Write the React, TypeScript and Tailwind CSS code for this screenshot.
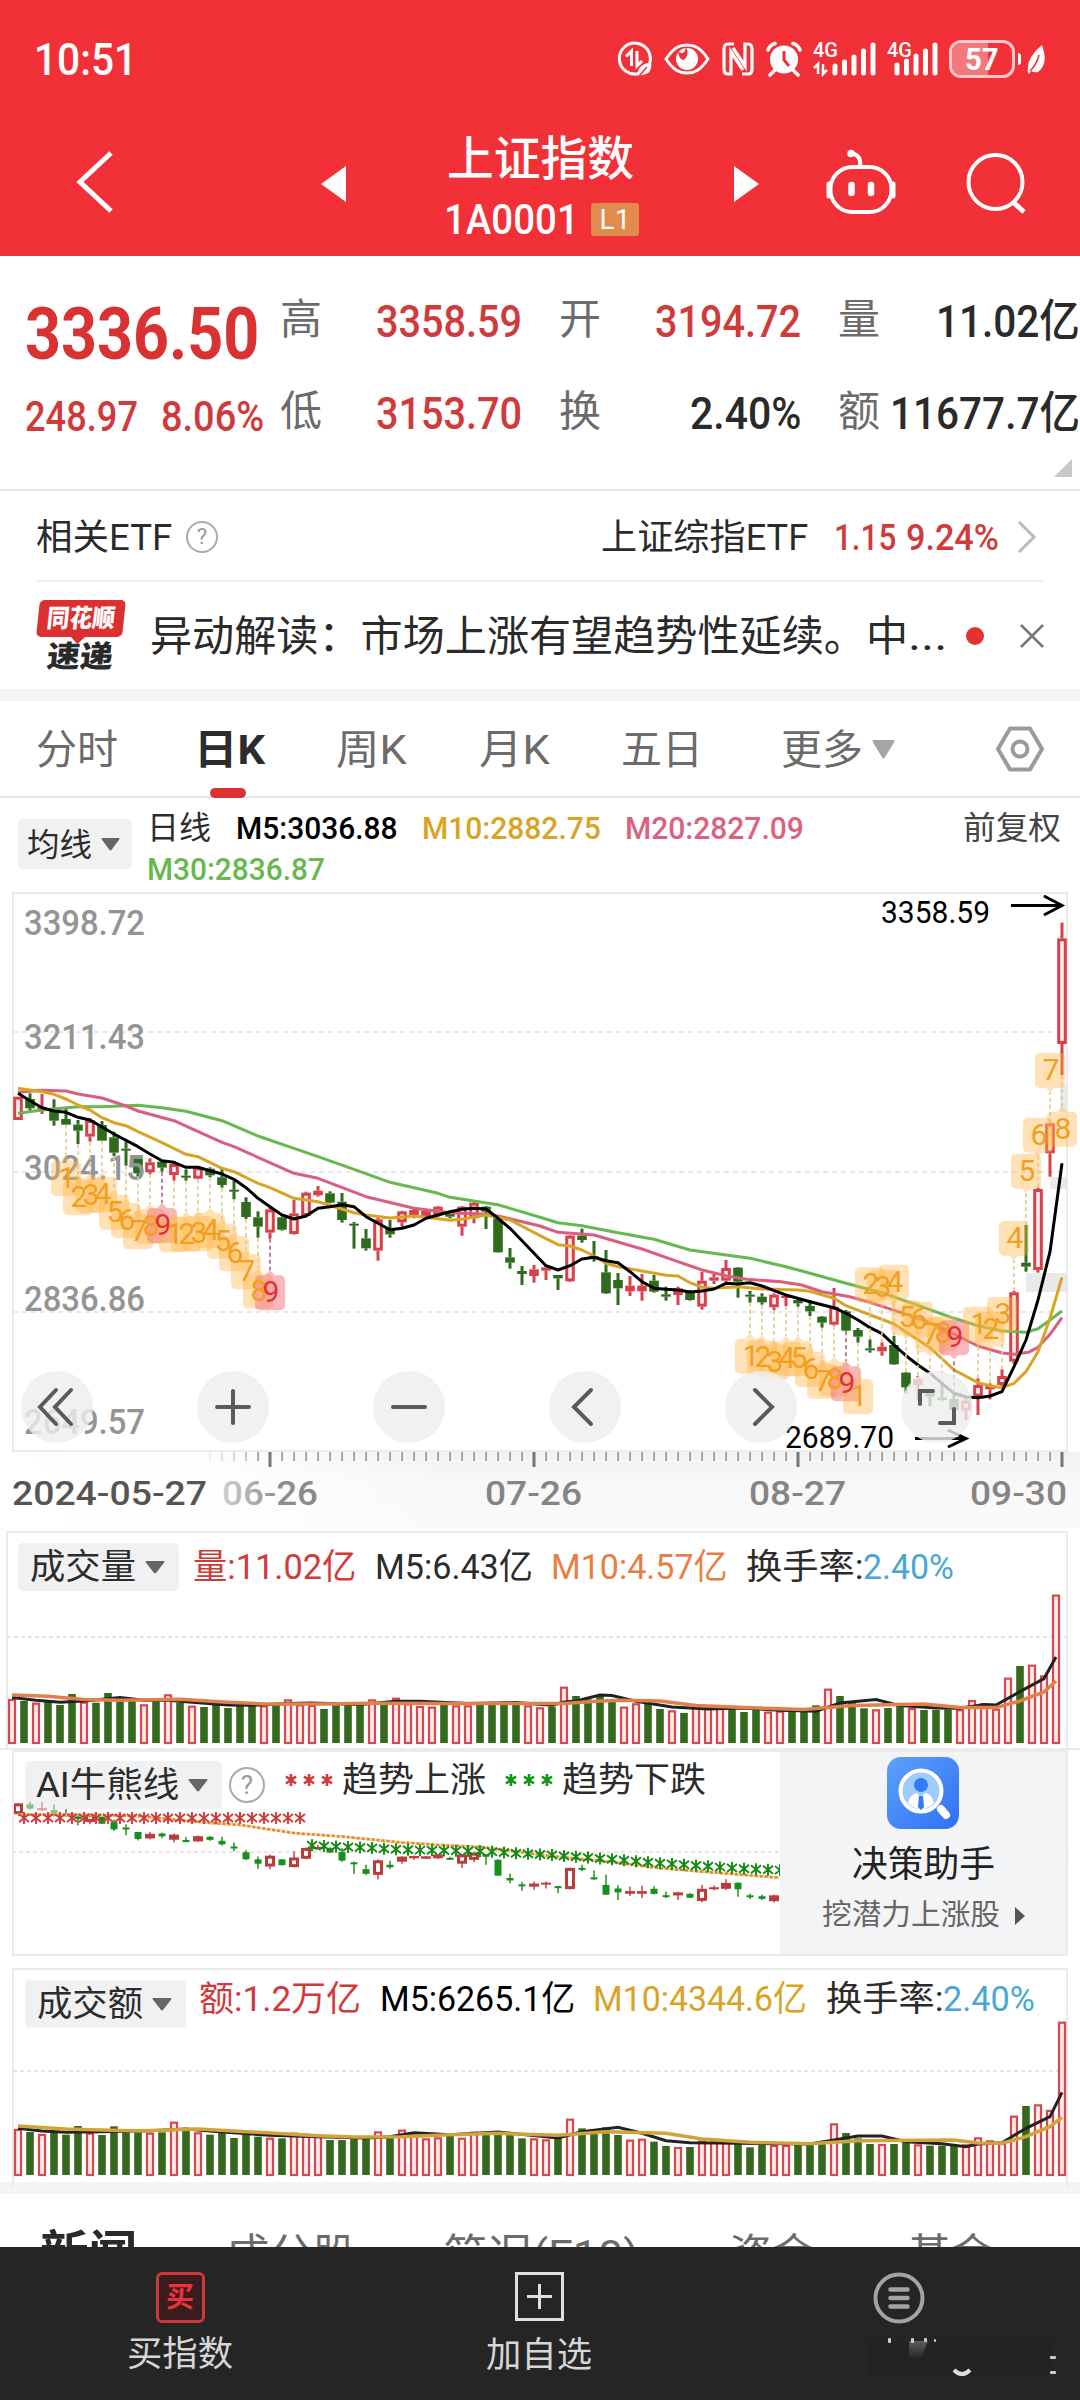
import React, { useLayoutEffect, useRef, useState } from "react";

const FONT = "Roboto, 'Noto Sans CJK SC', sans-serif";

/* Text condensed or widened to fill the width given by its class. */
function Fit({ className = "", children }: { className?: string; children: React.ReactNode }) {
  const outer = useRef<HTMLSpanElement>(null);
  const inner = useRef<HTMLSpanElement>(null);
  const [scale, setScale] = useState(1);
  useLayoutEffect(() => {
    if (outer.current && inner.current && inner.current.offsetWidth) {
      setScale(outer.current.clientWidth / inner.current.offsetWidth);
    }
  }, []);
  return (
    <span ref={outer} className={`block shrink-0 whitespace-nowrap leading-none ${className}`}>
      <span ref={inner} className="inline-block origin-left" style={{ transform: `scaleX(${scale})` }}>
        {children}
      </span>
    </span>
  );
}

function Label({ x, y, w, size, fill, children, weight = 500 }: { x: number; y: number; w: number; size: number; fill: string; children: string; weight?: number }) {
  return (
    <text x={x} y={y} fontSize={size} fill={fill} textLength={w} lengthAdjust="spacingAndGlyphs" fontWeight={weight} style={{ fontFamily: FONT }}>
      {children}
    </text>
  );
}

function Caret({ className }: { className: string }) {
  return (
    <svg viewBox="0 0 20 14" preserveAspectRatio="none" className={className}>
      <path d="M1 0H19Q20 1 19 2L11 13Q10 14 9 13L1 2Q0 1 1 0Z" fill="currentColor" />
    </svg>
  );
}

function Help({ className }: { className: string }) {
  return <span className={`flex shrink-0 items-center justify-center rounded-full border-2 border-[#aaa] leading-none text-[#999] ${className}`}>?</span>;
}

/* Each row: up or down, body top, body bottom, wick top, wick bottom. */
type Candle = [number, number, number, number, number];
const U = 1;
const D = 0;
const candles: Candle[] = [
  [U, 620, 690, 620, 690], [D, 627, 655, 610, 662], [U, 652, 656, 612, 672], [D, 662, 692, 628, 707], [D, 687, 704, 657, 704],
  [D, 704, 722, 690, 762], [U, 690, 740, 685, 755], [D, 705, 752, 693, 752], [D, 742, 788, 725, 798], [D, 776, 781, 755, 827],
  [D, 805, 850, 805, 860], [U, 817, 847, 805, 852], [D, 815, 833, 810, 845], [U, 822, 855, 815, 872], [D, 857, 862, 838, 872],
  [U, 832, 866, 828, 868], [D, 836, 856, 832, 862], [D, 862, 885, 835, 893], [D, 899, 904, 873, 928], [D, 936, 981, 922, 987],
  [D, 982, 1010, 964, 1043], [U, 958, 1028, 950, 1046], [D, 982, 1019, 980, 1022], [U, 970, 1032, 930, 1034], [U, 908, 978, 905, 982],
  [U, 902, 916, 888, 920], [D, 910, 938, 904, 940], [D, 935, 990, 909, 998], [D, 1001, 1006, 996, 1076], [D, 1045, 1075, 1017, 1082],
  [U, 988, 1082, 982, 1112], [D, 1017, 1033, 990, 1043], [U, 964, 997, 962, 1010], [U, 960, 975, 957, 985], [U, 962, 978, 960, 980],
  [U, 950, 975, 948, 980], [D, 972, 980, 965, 985], [U, 950, 1010, 948, 1037], [U, 938, 985, 932, 1000], [D, 950, 965, 948, 1017],
  [D, 985, 1087, 980, 1088], [D, 1102, 1118, 1074, 1136], [D, 1143, 1152, 1128, 1185], [U, 1138, 1158, 1125, 1178], [U, 1132, 1142, 1125, 1170],
  [D, 1155, 1165, 1155, 1200], [U, 1037, 1174, 1035, 1176], [D, 1037, 1050, 1016, 1058], [D, 1098, 1103, 1053, 1115], [D, 1147, 1210, 1080, 1212],
  [D, 1170, 1195, 1149, 1245], [U, 1187, 1204, 1158, 1218], [U, 1187, 1204, 1152, 1232], [D, 1172, 1205, 1155, 1208], [D, 1213, 1220, 1190, 1232],
  [U, 1195, 1215, 1190, 1245], [D, 1205, 1230, 1200, 1232], [U, 1172, 1250, 1146, 1259], [U, 1162, 1172, 1150, 1182], [U, 1134, 1172, 1110, 1180],
  [D, 1133, 1175, 1131, 1223], [D, 1214, 1220, 1203, 1238], [D, 1220, 1237, 1210, 1244], [U, 1214, 1252, 1210, 1260], [U, 1218, 1224, 1215, 1248],
  [D, 1230, 1240, 1226, 1250], [D, 1248, 1264, 1230, 1278], [D, 1280, 1298, 1278, 1313], [U, 1250, 1304, 1194, 1307], [D, 1264, 1322, 1260, 1324],
  [D, 1320, 1340, 1314, 1358], [D, 1375, 1381, 1348, 1388], [U, 1370, 1384, 1357, 1397], [D, 1365, 1423, 1338, 1425], [D, 1448, 1492, 1446, 1510],
  [U, 1468, 1485, 1458, 1530], [D, 1505, 1520, 1500, 1548], [D, 1522, 1530, 1475, 1532], [D, 1527, 1560, 1510, 1562], [U, 1532, 1562, 1525, 1590],
  [U, 1485, 1520, 1465, 1575], [U, 1488, 1498, 1480, 1528], [U, 1458, 1485, 1438, 1490], [U, 1207, 1415, 1203, 1422], [D, 1118, 1130, 1005, 1145],
  [U, 897, 1140, 893, 1148], [U, 700, 790, 698, 860], [U, 145, 462, 98, 555],
];

type Pt = [number, number];
const ma5: Pt[] = [[0, 610], [1, 632], [2, 653], [3, 663], [4, 667], [5, 682], [6, 690], [8, 732], [10, 770], [11, 792], [12, 812], [13, 817], [14, 832], [15, 832], [16, 842], [17, 852], [18, 868], [19, 893], [20, 925], [21, 950], [22, 975], [23, 987], [24, 978], [25, 955], [26, 950], [27, 944], [28, 950], [29, 980], [30, 1000], [31, 1019], [32, 1015], [33, 1005], [34, 985], [35, 975], [36, 965], [37, 958], [38, 955], [39, 957], [40, 985], [41, 1015], [42, 1052], [43, 1090], [44, 1127], [45, 1140], [46, 1127], [47, 1107], [48, 1102], [49, 1112], [50, 1118], [51, 1145], [52, 1175], [53, 1195], [54, 1198], [55, 1200], [56, 1206], [57, 1203], [58, 1197], [59, 1180], [60, 1182], [61, 1178], [62, 1188], [63, 1202], [64, 1215], [66, 1235], [68, 1253], [69, 1270], [70, 1290], [71, 1313], [72, 1331], [73, 1365], [74, 1397], [75, 1425], [76, 1450], [77, 1480], [78, 1510], [79, 1521], [80, 1523], [81, 1518], [82, 1505], [83, 1430], [84, 1350], [85, 1230], [86, 1085], [87, 820]];
const ma10: Pt[] = [[0, 595], [1, 600], [2, 605], [3, 613], [4, 627], [5, 645], [6, 660], [7, 683], [8, 698], [9, 707], [10, 725], [12, 758], [14, 793], [15, 800], [17, 835], [18, 845], [20, 880], [21, 893], [23, 925], [25, 935], [28, 968], [29, 975], [31, 984], [33, 978], [34, 982], [36, 991], [37, 988], [39, 975], [41, 990], [43.5, 1037], [45, 1064], [46, 1068], [47, 1080], [48, 1098], [49, 1120], [50, 1130], [52, 1143], [54, 1156], [55, 1158], [56, 1178], [57, 1192], [58, 1195], [60, 1190], [62, 1197], [65, 1200], [66, 1204], [68, 1225], [69, 1247], [73, 1302], [76, 1373], [78, 1440], [80, 1478], [81, 1487], [82, 1493], [83, 1480], [84, 1445], [85, 1385], [86, 1285], [87, 1162]];
const ma20: Pt[] = [[0, 607], [2, 601], [4, 603], [5, 612], [7, 624], [9, 648], [10, 663], [13, 692], [17, 757], [18, 770], [23, 850], [25, 865], [29, 920], [33, 955], [36, 968], [39, 973], [40, 978], [43.5, 1008], [45, 1027], [48, 1035], [52, 1077], [55, 1115], [57, 1140], [59, 1157], [60.7, 1168], [63.6, 1175], [65.3, 1185], [67, 1205], [69.3, 1220], [71, 1237], [73.6, 1268], [76, 1298], [78, 1332], [80, 1368], [82, 1389], [83, 1393], [84.2, 1387], [85, 1372], [86, 1333], [87, 1283]];
const ma30: Pt[] = [[0, 670], [2, 660], [5, 650], [7, 650], [10, 646], [12, 653], [14, 664], [17, 692], [20, 738], [23, 775], [25, 800], [28, 838], [31, 877], [33, 893], [35, 910], [36, 922], [40, 944], [43.5, 982], [45, 998], [47, 1007], [50, 1028], [53, 1048], [56, 1080], [59, 1095], [61, 1105], [64, 1130], [66, 1150], [69, 1180], [72, 1208], [75, 1246], [78, 1285], [80, 1307], [82, 1323], [84, 1327], [85, 1316], [86, 1290], [87, 1263]];

const cx = (i: number) => 18 + 12 * i;
const cy = (v: number) => v / 3;
const line = (pts: Pt[], fx: (n: number) => number, fy: (n: number) => number) => pts.map(([a, b]) => `${fx(a).toFixed(1)},${fy(b).toFixed(1)}`).join(" ");

/* Nine-turn markers: candle index, centre, digit, placement. */
type Mark = [number, number, string, "below" | "above"];
const marks: Mark[] = [
  [4, 864, "1", "below"], [5, 922, "2", "below"], [6, 915, "3", "below"], [7, 913, "4", "below"], [8, 965, "5", "below"], [9, 990, "6", "below"], [10, 1024, "7", "below"], [11, 1008, "8", "below"], [12, 1005, "9", "below"],
  [13, 1033, "1", "below"], [14, 1031, "2", "below"], [15, 1029, "3", "below"], [16, 1020, "4", "below"], [17, 1052, "5", "below"], [18, 1090, "6", "below"], [19, 1144, "7", "below"], [20, 1202, "8", "below"], [21, 1207, "9", "below"],
  [61, 1397, "1", "below"], [62, 1402, "2", "below"], [63, 1415, "3", "below"], [64, 1405, "4", "below"], [65, 1405, "5", "below"], [66, 1437, "6", "below"], [67, 1472, "7", "below"], [68, 1466, "8", "below"], [69, 1480, "9", "below"], [70, 1519, "1", "below"],
  [71, 1183, "2", "above"], [72, 1190, "3", "above"], [73, 1175, "4", "above"], [74, 1282, "5", "above"], [75, 1286, "6", "above"], [76, 1333, "7", "above"], [77, 1330, "8", "above"], [78, 1342, "9", "above"],
  [80, 1301, "1", "above"], [81, 1316, "2", "above"], [82, 1272, "3", "above"], [83, 1044, "4", "above"], [84, 842, "5", "above"], [85, 734, "6", "above"], [86, 540, "7", "above"], [87, 716, "8", "below"],
];

function CandleGlyph({ x, t, b, h, l, up, red, green, w }: { x: number; t: number; b: number; h: number; l: number; up: boolean; red: string; green: string; w: number }) {
  const c = up ? red : green;
  const body = Math.max(b - t, 2);
  return (
    <g>
      {h < t && <rect x={x - 1.5} y={h} width={3} height={t - h} fill={c} />}
      {l > b && <rect x={x - 1.5} y={b} width={3} height={l - b} fill={c} />}
      {up && body > 8 ? (
        <rect x={x - w / 2 + 1.5} y={t + 1.5} width={w - 3} height={body - 3} fill="#fff1f0" stroke={c} strokeWidth={3} />
      ) : (
        <rect x={x - w / 2} y={t} width={w} height={body} fill={c} />
      )}
    </g>
  );
}

function PriceChart() {
  const axis: [number, string][] = [[45, "3398.72"], [159, "3211.43"], [290, "3024.15"], [421, "2836.86"], [544, "2649.57"]];
  return (
    <svg width="1080" height="641" viewBox="0 0 1080 641" className="block">
      <defs>
        <linearGradient id="ruler" x1="0" y1="0" x2="0" y2="1">
          <stop offset="0" stopColor="#f1f1f1" />
          <stop offset="0.35" stopColor="#f8f8f8" />
          <stop offset="1" stopColor="#fafafa" />
        </linearGradient>
        <linearGradient id="fade" x1="0" y1="0" x2="1" y2="0">
          <stop offset="0" stopColor="#fff" />
          <stop offset="0.45" stopColor="#fff" stopOpacity="0.9" />
          <stop offset="1" stopColor="#fff" stopOpacity="0" />
        </linearGradient>
        <linearGradient id="dateFade" x1="0" y1="0" x2="1" y2="0">
          <stop offset="0" stopColor="#cfcfcf" />
          <stop offset="0.6" stopColor="#8e8e8e" />
          <stop offset="1" stopColor="#888" />
        </linearGradient>
      </defs>
      <rect x="0" y="562" width="1080" height="76" fill="url(#ruler)" />
      <rect x="0" y="561" width="440" height="78" fill="url(#fade)" />
      <rect x="13" y="3" width="1054" height="558" fill="#fff" stroke="#ebebeb" strokeWidth="2" />
      {[142, 282, 422].map((y) => (
        <line key={y} x1="13" x2="1067" y1={y} y2={y} stroke="#e8e8e8" strokeWidth="2" strokeDasharray="5 4" />
      ))}
      <g fill="#e4e4e4" opacity="0.8">
        <rect x="1026" y="383" width="41" height="19" />
        <rect x="1050" y="287" width="17" height="12" />
        <rect x="1060" y="195" width="7" height="27" />
      </g>
      <g>
        {candles.map(([d, t, b, h, l], i) => (
          <CandleGlyph key={i} x={cx(i)} t={cy(t)} b={cy(b)} h={cy(h)} l={cy(l)} up={d === U} red="#d8414a" green="#2f6b1c" w={9.6} />
        ))}
      </g>
      <g fill="none" strokeWidth="3" strokeLinejoin="round">
        <polyline points={line(ma30, cx, cy)} stroke="#66b84f" />
        <polyline points={line(ma20, cx, cy)} stroke="#d95f7e" />
        <polyline points={line(ma10, cx, cy)} stroke="#d9a325" />
        <polyline points={line(ma5, cx, cy)} stroke="#000" />
      </g>
      {axis.map(([y, s]) => (
        <Label key={s} x={24} y={y} w={121} size={35} fill="#949494">{s}</Label>
      ))}
      {marks.map(([i, v, s, side], k) => {
        const x = cx(i);
        const y = cy(v);
        const nine = s === "9";
        const below = side === "below";
        const end = below ? cy(candles[i][4]) : cy(candles[i][3]);
        const tip = below ? y - 22 : y + 22;
        const tail = below ? "M-5,-17 L0,-22 L5,-17Z" : "M-5,17 L0,22 L5,17Z";
        return (
          <g key={k}>
            <line x1={x} x2={x} y1={end} y2={tip} stroke={nine ? "#b0607a" : "#dccb8e"} strokeWidth="1.6" strokeDasharray="4 3" />
            <g transform={`translate(${x} ${y})`} fill={nine ? "#f5707a" : "#ffb648"} opacity={nine ? 0.5 : 0.4}>
              <rect x="-15" y="-17" width="30" height="35" rx="5" />
              <path d={tail} />
            </g>
          </g>
        );
      })}
      {marks.map(([i, v, s], k) => (
        <text key={k} x={cx(i) + 1} y={cy(v) + 10} fontSize="30" textAnchor="middle" fill={s === "9" ? "#e0303c" : "#f0a01e"} style={{ fontFamily: FONT }}>{s}</text>
      ))}
      <Label x={881} y={33} w={109} size={31} fill="#000" weight={400}>3358.59</Label>
      <path d="M1011 15.500H1061M1044 6L1062 15.500L1044 25" fill="none" stroke="#000" strokeWidth="3" />
      <Label x={785} y={558} w={109} size={31} fill="#000" weight={400}>2689.70</Label>
      <path d="M915 548.500H966M948 540L966 548.500L948 557" fill="none" stroke="#000" strokeWidth="3" />
      {Array.from({ length: 72 }, (_, k) => k + 16).map((i) => {
        const big = i === 21 || i === 43 || i === 65 || i === 87;
        return <rect key={i} x={cx(i) - (big ? 1.5 : 0.5)} y={562} width={big ? 3 : 1.2} height={big ? 15 : 9} fill="#777" opacity={i < 20 ? (i - 15) / 6 : 1} />;
      })}
      <Label x={12} y={615} w={195} size={34} fill="#555">2024-05-27</Label>
      <Label x={222} y={615} w={96} size={34} fill="url(#dateFade)">06-26</Label>
      <Label x={485} y={615} w={97} size={34} fill="#858585">07-26</Label>
      <Label x={749} y={615} w={97} size={34} fill="#858585">08-27</Label>
      <Label x={970} y={615} w={97} size={34} fill="#858585">09-30</Label>
    </svg>
  );
}

const volume = [132, 126, 121, 124, 114, 147, 124, 121, 150, 134, 129, 116, 126, 146, 121, 112, 108, 119, 105, 114, 113, 113, 113, 131, 116, 114, 102, 113, 114, 116, 131, 117, 136, 119, 111, 109, 121, 113, 113, 119, 117, 124, 117, 113, 107, 109, 169, 141, 131, 143, 123, 109, 119, 119, 102, 98, 90, 109, 107, 109, 104, 93, 102, 94, 97, 101, 97, 113, 163, 141, 124, 104, 101, 105, 111, 105, 99, 99, 101, 101, 129, 119, 103, 196, 231, 235, 203, 445];
const amount = [138, 129, 123, 128, 121, 147, 127, 120, 146, 133, 132, 127, 128, 160, 133, 128, 121, 132, 111, 120, 115, 112, 110, 127, 124, 117, 105, 105, 108, 112, 131, 112, 136, 122, 110, 113, 122, 112, 130, 123, 127, 124, 110, 110, 107, 110, 169, 140, 134, 143, 120, 106, 109, 100, 87, 84, 84, 103, 101, 99, 98, 83, 101, 90, 90, 92, 90, 98, 155, 126, 110, 93, 93, 93, 100, 92, 88, 88, 90, 92, 113, 104, 96, 178, 207, 212, 195, 460];
const volM5: Pt[] = [[0, 532], [2, 540], [4, 546], [6, 542], [9, 532], [11, 540], [13, 540], [15, 546], [18, 554], [20, 555], [23, 550], [25, 548], [29, 553], [32, 543], [34, 543], [38, 550], [42, 547], [45, 555], [46, 545], [47, 542], [49, 524], [50, 526], [52, 543], [55, 560], [58, 566], [61, 563], [64, 570], [67, 573], [69, 548], [72, 538], [74, 556], [77, 563], [79, 564], [81, 553], [82, 554], [84, 514], [86, 475], [87, 410]];
const volM10: Pt[] = [[0, 524], [3, 528], [6, 538], [9, 540], [14, 537], [18, 546], [21, 551], [26, 551], [30, 549], [36, 550], [42, 550], [46, 550], [49, 542], [51, 540], [54, 542], [57, 556], [61, 562], [66, 568], [68, 562], [70, 556], [74, 553], [76, 551], [79, 562], [82, 562], [84, 542], [86, 515], [87, 482]];
const amtM5: Pt[] = [[0, 505], [2, 513], [4, 517], [7, 515], [11, 512], [14, 507], [17, 516], [21, 526], [25, 530], [29, 534], [31, 530], [33, 518], [36, 524], [40, 516], [45, 534], [47, 515], [50, 502], [52, 520], [54, 542], [56, 548], [60, 550], [66, 552], [70, 528], [72, 528], [74, 545], [77, 551], [79, 560], [80, 552], [82, 548], [84, 505], [86, 470], [87, 397]];
const amtM10: Pt[] = [[0, 498], [4, 507], [10, 513], [15, 507], [20, 517], [25, 527], [28, 531], [32, 530], [36, 524], [40, 520], [45, 526], [49, 515], [54, 520], [57, 537], [61, 547], [66, 551], [70, 542], [78, 540], [80, 549], [82, 550], [84, 530], [86, 500], [87, 472]];

function Bars({ data, x0, base, gridY, m5, m10, origin, m10Color, left }: { data: number[]; x0: number; base: number; gridY: number; m5: Pt[]; m10: Pt[]; origin: number; m10Color: string; left: number }) {
  const fx = (i: number) => x0 + 12 * i;
  const fy = (v: number) => v / 3 - origin;
  return (
    <svg width="1080" height="220" viewBox="0 0 1080 220" className="absolute left-0 top-0">
      <path d={`M${left} 219V1H1067V219`} fill="none" stroke="#ebebeb" strokeWidth="2" />
      <line x1={left} x2="1067" y1={gridY} y2={gridY} stroke="#dcdcdc" strokeWidth="1.500" strokeDasharray="4 3" />
      {data.map((v, i) => {
        const h = v / 3;
        return candles[i][0] === U ? (
          <rect key={i} x={fx(i) - 3} y={base - h + 1} width={6} height={h - 1} fill="#ffeceb" stroke="#d8474f" strokeWidth="2.200" />
        ) : (
          <rect key={i} x={fx(i) - 3.8} y={base - h} width={7.6} height={h} fill="#35691d" />
        );
      })}
      <polyline points={line(m5, fx, fy)} fill="none" stroke="#222" strokeWidth="3" />
      <polyline points={line(m10, fx, fy)} fill="none" stroke={m10Color} strokeWidth="3.500" />
    </svg>
  );
}

function Stars({ x, y, color }: { x: number; y: number; color: string }) {
  return <path transform={`translate(${x} ${y})`} d="M0 -6V6M-5 -4L5 4M5 -4L-5 4" stroke={color} strokeWidth="1.900" fill="none" />;
}

function LegendStars({ color }: { color: string }) {
  return (
    <svg width="50" height="20" viewBox="0 0 50 20" className="block">
      {[7, 25, 43].map((x) => (
        <path key={x} transform={`translate(${x} 10)`} d="M0 -6V6M-5 -3.500L5 3.500M5 -3.500L-5 3.500" stroke={color} strokeWidth="2.600" fill="none" />
      ))}
    </svg>
  );
}

function TrendChart() {
  const ay = (v: number) => (190 + (v - 620) * 0.4645) / 3 - 12;
  const dotted: Pt[] = [[26, 224], [120, 224], [200, 228], [260, 240], [300, 248], [350, 255], [380, 265], [430, 280], [500, 290], [580, 307], [640, 315], [700, 321], [750, 335], [800, 348], [870, 362], [960, 385], [1131, 413]];
  const green: Pt[] = [[452, 316], [600, 330], [700, 334], [800, 345], [870, 355], [960, 370], [1080, 386], [1140, 391]];
  const at = (x: number) => {
    const k = Math.max(1, green.findIndex((p) => p[0] >= x));
    const [x1, y1] = green[k - 1];
    const [x2, y2] = green[k];
    return y1 + ((x - x1) / (x2 - x1)) * (y2 - y1);
  };
  return (
    <svg width="766" height="202" viewBox="14 0 766 202" className="absolute left-0 top-0">
      <line x1="12" x2="780" y1="100" y2="100" stroke="#e9dada" strokeWidth="1.500" strokeDasharray="4 3" />
      {candles.slice(0, 65).map(([d, t, b, h, l], i) => (
        <g key={i} opacity={i > 0 && i < 4 ? 0.5 : 1}>
          <rect x={cx(i) - 0.75} y={ay(h)} width={1.5} height={ay(l) - ay(h)} fill={d === U ? "#c8433f" : "#2f8a2a"} />
          {d === U && b - t > 26 ? (
            <rect x={cx(i) - 3.5} y={ay(t) + 1.5} width={7} height={Math.max(1, ay(b) - ay(t) - 3)} fill="#fff" stroke="#b93c3b" strokeWidth="3" />
          ) : (
            <rect x={cx(i) - (d === U ? 5 : 3.5)} y={ay(t)} width={d === U ? 10 : 7} height={Math.max(2, ay(b) - ay(t))} fill={d === U ? "#c03b3b" : "#14911c"} />
          )}
        </g>
      ))}
      <polyline points={line(dotted, (n) => n / 1.452, (n) => n / 3 - 12)} fill="none" stroke="#fbd9a0" strokeWidth="3" />
      <polyline points={line(dotted, (n) => n / 1.452, (n) => n / 3 - 12)} fill="none" stroke="#d98a3a" strokeWidth="2.500" strokeDasharray="3 2" />
      {Array.from({ length: 24 }, (_, i) => <Stars key={i} x={24 + 12 * i} y={66} color="#d23a3a" />)}
      {Array.from({ length: 40 }, (_, i) => <Stars key={i} x={312 + 12 * i} y={at(453 + 17.424 * i) / 3 - 12} color="#128a12" />)}
    </svg>
  );
}

function Signal({ updown }: { updown: boolean }) {
  const heights = updown ? [10, 14, 19, 25, 31] : [11, 15, 20, 25, 31];
  return (
    <svg width={updown ? 64 : 51} height="38" viewBox={updown ? "0 0 64 38" : "0 0 51 38"} className="shrink-0">
      <text x="0" y="17" fontSize="21" fill="#fff" fontWeight="500" textLength="25" lengthAdjust="spacingAndGlyphs" style={{ fontFamily: FONT }}>4G</text>
      {updown && <path d="M5 34V24L1 28M10 24V34L14 30" fill="none" stroke="#fff" strokeWidth="2.500" />}
      {heights.map((h, k) => {
        const x = (updown ? 20 : 8) + k * 9.5;
        return <path key={k} d={`M${x + 2} ${34 - h + 2}V33`} stroke="#fff" strokeWidth="5" strokeLinecap="round" />;
      })}
    </svg>
  );
}

function StatusBar() {
  return (
    <div className="flex h-[118px] items-center pl-[34px] text-white">
      <Fit className="w-[103px] text-[45px] font-medium">10:51</Fit>
      <svg width="36" height="36" viewBox="0 0 36 36" className="ml-[480px] shrink-0" fill="none" stroke="#fff">
        <path d="M22 32.500A15.500 15.500 0 1 1 32.700 22" strokeWidth="3" />
        <path d="M14.500 25V10L9 15.500M20 10V25L25 20" strokeWidth="3" />
        <path d="M21 35Q19 24 34 21Q36 33 25 34Z" fill="#fff" stroke="none" />
        <path d="M22 35L30 26" stroke="#f23038" strokeWidth="1.500" />
      </svg>
      <svg width="46" height="32" viewBox="0 0 46 32" className="ml-[11px] shrink-0">
        <path d="M2 16C10 4 16 2 23 2S36 4 44 16C36 28 30 30 23 30S10 28 2 16Z" fill="none" stroke="#fff" strokeWidth="3" />
        <circle cx="23" cy="16" r="11" fill="#fff" />
        <path d="M14 8Q20 14 22 4Q26 12 20 17Q15 17 14 8Z" fill="#f23038" />
      </svg>
      <svg width="32" height="34" viewBox="0 0 32 34" className="ml-[12px] shrink-0" fill="none" stroke="#fff" strokeWidth="3.200">
        <path d="M12 2H6Q2 2 2 7V27Q2 32 6 32H9V10L21 28" />
        <path d="M20 32H26Q30 32 30 27V7Q30 2 26 2H23V24L11 6" />
      </svg>
      <svg width="36" height="36" viewBox="0 0 36 36" className="ml-[12px] shrink-0">
        <circle cx="18" cy="18.500" r="14" fill="#fff" />
        <path d="M18 10V19L23 25" fill="none" stroke="#f23038" strokeWidth="3" />
        <path d="M2 9Q4 4 9 2.500M34 9Q32 4 27 2.500M9 29L4 34M27 29L32 34" stroke="#fff" strokeWidth="3.500" fill="none" strokeLinecap="round" />
      </svg>
      <span className="ml-[11px] flex"><Signal updown /></span>
      <span className="ml-[10px] flex"><Signal updown={false} /></span>
      <span className="relative ml-[11px] flex h-[38px] w-[66px] shrink-0 items-center justify-center overflow-hidden rounded-[12px] border-[3px] border-[#ffc9cb]">
        <span className="absolute left-0 top-0 h-full w-[36px] bg-[#f4777d]" />
        <span className="relative"><Fit className="w-[34px] text-[32px] font-bold">57</Fit></span>
      </span>
      <span className="ml-[3px] h-[12px] w-[3px] shrink-0 rounded-r bg-white" />
      <svg width="20" height="30" viewBox="0 0 20 30" className="ml-[6px] shrink-0">
        <path d="M15 1Q22 20 11 28Q7 29 4 27L2 30L1 28Q-1 14 15 1Z" fill="#fff" />
        <path d="M3 27Q10 20 12 11" stroke="#f23038" strokeWidth="1.500" fill="none" />
      </svg>
    </div>
  );
}

function NavBar() {
  return (
    <div className="flex h-[128px] items-center pl-[75px]">
      <svg width="40" height="64" viewBox="0 0 40 64" className="shrink-0">
        <path d="M36 3L5 32L36 61" fill="none" stroke="#fff" strokeWidth="5" />
      </svg>
      <svg width="25" height="36" viewBox="0 0 25 36" className="ml-[206px] mt-[4px] shrink-0"><path d="M0 18L25 0V36Z" fill="#fff" /></svg>
      <div className="ml-[98px] mt-[7px] flex w-[200px] flex-col text-white">
        <div className="flex h-[50px] items-center pl-[3px]"><Fit className="w-[187px] text-[47px] font-medium">上证指数</Fit></div>
        <div className="mt-[18px] flex h-[36px] items-center">
          <Fit className="w-[135px] text-[43px] font-medium">1A0001</Fit>
          <span className="ml-[12px] flex h-[33px] w-[48px] items-center justify-center rounded-[3px] bg-[#e18c4c] text-[28px] leading-none">L1</span>
        </div>
      </div>
      <svg width="25" height="36" viewBox="0 0 25 36" className="ml-[90px] mt-[4px] shrink-0"><path d="M25 18L0 0V36Z" fill="#fff" /></svg>
      <svg width="70" height="66" viewBox="0 0 70 66" className="ml-[67px] shrink-0" fill="none" stroke="#fff" strokeLinecap="round">
        <rect x="4.500" y="18" width="61" height="45" rx="22" strokeWidth="4" />
        <path d="M34 18Q36 6 25 4" strokeWidth="4" />
        <circle cx="25" cy="4.500" r="2" strokeWidth="3.500" />
        <path d="M3 35V47M67 35V47" strokeWidth="5" />
        <path d="M25.500 36V44M45 36V44" strokeWidth="6.500" />
      </svg>
      <svg width="66" height="66" viewBox="0 0 66 66" className="ml-[68px] mt-[2px] shrink-0" fill="none" stroke="#fff" strokeWidth="4">
        <circle cx="31.500" cy="32" r="27" />
        <path d="M49 52L60 62" strokeWidth="5" />
      </svg>
    </div>
  );
}

function QuoteRow({ items }: { items: { k: string; v: string; w: string; red?: boolean }[] }) {
  return (
    <div className="flex h-[48px] items-center">
      {items.map((it, n) => (
        <div key={it.k} className={n < 2 ? "flex w-[279px] items-center justify-between pr-[37px]" : "flex w-[242px] items-center justify-between"}>
          <Fit className="mb-[2px] w-[42px] text-[42px] text-[#6b6b6b]">{it.k}</Fit>
          <Fit className={`text-[45px] font-medium ${it.w} ${it.red ? "text-[#d03a3a]" : "text-[#2a2a2a]"}`}>{it.v}</Fit>
        </div>
      ))}
    </div>
  );
}

function Quote() {
  return (
    <section className="relative flex h-[235px] border-b-2 border-[#e6e6e6]">
      <div className="flex w-[280px] shrink-0 flex-col pl-[25px] text-[#d83232]">
        <div className="mt-[42px] flex h-[72px] items-center"><Fit className="w-[234px] text-[73px] font-bold">3336.50</Fit></div>
        <div className="mt-[23px] flex h-[48px] items-center font-medium text-[#d03a3a]">
          <Fit className="w-[113px] text-[42px]">248.97</Fit>
          <Fit className="ml-[23px] w-[103px] text-[42px]">8.06%</Fit>
        </div>
      </div>
      <div className="flex flex-col">
        <div className="mt-[41px]">
          <QuoteRow items={[{ k: "高", v: "3358.59", w: "w-[146px]", red: true }, { k: "开", v: "3194.72", w: "w-[146px]", red: true }, { k: "量", v: "11.02亿", w: "w-[144px]" }]} />
        </div>
        <div className="mt-[44px]">
          <QuoteRow items={[{ k: "低", v: "3153.70", w: "w-[146px]", red: true }, { k: "换", v: "2.40%", w: "w-[111px]" }, { k: "额", v: "11677.7亿", w: "w-[190px]" }]} />
        </div>
      </div>
      <svg width="18" height="18" viewBox="0 0 18 18" className="absolute bottom-[12px] right-[8px]"><path d="M18 0V18H0Z" fill="#c9c9c9" /></svg>
    </section>
  );
}

function News() {
  return (
    <>
      <div className="mx-[36px] flex h-[91px] items-center border-b-2 border-[#efefef] pt-[2px] text-[#2a2a2a]">
        <Fit className="mt-[2px] w-[136px] text-[36px]">相关ETF</Fit>
        <Help className="ml-[14px] h-[32px] w-[32px] text-[22px]" />
        <Fit className="ml-[383px] mt-[2px] w-[207px] text-[36px]">上证综指ETF</Fit>
        <Fit className="ml-[26px] mt-[2px] w-[62px] text-[36px] font-medium text-[#d03a3a]">1.15</Fit>
        <Fit className="ml-[10px] mt-[2px] w-[93px] text-[36px] font-medium text-[#d03a3a]">9.24%</Fit>
        <svg width="20" height="34" viewBox="0 0 20 34" className="ml-[18px]"><path d="M2 2L17 17L2 32" fill="none" stroke="#bbb" strokeWidth="3" /></svg>
      </div>
      <div className="flex h-[107px] items-center pl-[38px] text-[#2a2a2a]">
        <div className="flex w-[86px] shrink-0 flex-col">
          <div className="relative flex h-[37px] -skew-x-6 items-center justify-center rounded-[5px] bg-[#dc3030] text-white">
            <Fit className="w-[68px] text-[25px] font-black">同花顺</Fit>
            <span className="absolute -bottom-[5px] left-[37px] h-[10px] w-[10px] rotate-45 bg-[#dc3030]" />
          </div>
          <div className="ml-[9px] mt-[5px] flex h-[30px] -skew-x-6 items-center"><Fit className="w-[66px] text-[30px] font-black">速递</Fit></div>
        </div>
        <Fit className="ml-[26px] mt-[2px] w-[758px] text-[42px]">异动解读：市场上涨有望趋势性延续。中</Fit>
        <Fit className="w-[39px] text-[42px]">...</Fit>
        <span className="ml-[19px] h-[18px] w-[18px] shrink-0 rounded-full bg-[#e23330]" />
        <svg width="26" height="26" viewBox="0 0 26 26" className="ml-[35px] shrink-0"><path d="M2 2L24 24M24 2L2 24" stroke="#777" strokeWidth="2.500" /></svg>
      </div>
      <div className="h-[12px] bg-[#f4f4f4]" />
    </>
  );
}

function PeriodTabs() {
  return (
    <nav className="relative flex h-[97px] items-center border-b-2 border-[#e4e4e4] pl-[36px] text-[41px] text-[#6b6b6b]">
      <Fit className="mt-[4px] w-[82px]">分时</Fit>
      <Fit className="ml-[76px] mt-[4px] w-[71px] font-bold text-[#2c2c2c]">日K</Fit>
      <Fit className="ml-[71px] mt-[4px] w-[71px]">周K</Fit>
      <Fit className="ml-[72px] mt-[4px] w-[71px]">月K</Fit>
      <Fit className="ml-[71px] mt-[4px] w-[82px]">五日</Fit>
      <Fit className="ml-[78px] mt-[4px] w-[82px]">更多</Fit>
      <Caret className="ml-[9px] mt-[2px] h-[19px] w-[23px] text-[#a5a5a5]" />
      <svg width="50" height="46" viewBox="0 0 50 46" className="ml-[100px]" fill="none" stroke="#9a9a9a" strokeWidth="4">
        <path d="M15 2.500H35L47 23L35 43.500H15L3 23Z" strokeLinejoin="round" />
        <circle cx="25" cy="23" r="7.500" />
      </svg>
      <span className="absolute bottom-[-2px] left-[210px] h-[10px] w-[36px] rounded-[5px] bg-[#d83232]" />
    </nav>
  );
}

function MaLegend() {
  return (
    <div className="flex h-[92px] text-[#2c2c2c]">
      <div className="ml-[18px] mt-[21px] flex h-[50px] w-[114px] shrink-0 items-center rounded-[5px] bg-[#f1f1f1] pl-[9px]">
        <Fit className="mt-[2px] w-[65px] text-[32px]">均线</Fit>
        <Caret className="ml-[9px] h-[13px] w-[19px] text-[#666]" />
      </div>
      <div className="ml-[15px] flex w-[914px] flex-col pt-[9px] text-[32px]">
        <div className="flex h-[42px] items-center font-medium">
          <Fit className="w-[64px] font-normal">日线</Fit>
          <Fit className="ml-[25px] w-[162px] text-black">M5:3036.88</Fit>
          <Fit className="ml-[24px] w-[179px] text-[#d9a325]">M10:2882.75</Fit>
          <Fit className="ml-[24px] w-[179px] text-[#dd6280]">M20:2827.09</Fit>
          <Fit className="ml-[159px] w-[98px] font-normal text-[#444]">前复权</Fit>
        </div>
        <div className="flex h-[40px] items-center font-medium">
          <Fit className="w-[178px] text-[#66b84f]">M30:2836.87</Fit>
        </div>
      </div>
    </div>
  );
}

function RoundButton({ d }: { d: string }) {
  return (
    <span className="flex h-[72px] w-[72px] shrink-0 items-center justify-center rounded-full bg-[#ededed]/80">
      <svg width="40" height="40" viewBox="0 0 40 40" fill="none" stroke="#5a5a5a" strokeWidth="4" strokeLinecap="round"><path d={d} /></svg>
    </span>
  );
}

function Dropdown({ label, w, box, className }: { label: string; w: string; box: string; className: string }) {
  return (
    <div className={`flex h-[48px] shrink-0 items-center rounded-[5px] bg-[#f1f1f1] ${box} ${className}`}>
      <Fit className={`text-[35px] ${w}`}>{label}</Fit>
      <Caret className="ml-[9px] h-[13px] w-[20px] text-[#666]" />
    </div>
  );
}

function Indicators() {
  return (
    <>
      <section className="relative h-[219px] border-b-2 border-[#ebebeb]">
        <Bars data={volume} x0={12} base={212} gridY={106} m5={volM5} m10={volM10} origin={10.7} m10Color="#e0804a" left={7} />
        <div className="relative flex h-[72px] items-center text-[35px] text-[#2c2c2c]">
          <Dropdown label="成交量" w="w-[106px]" box="w-[161px] pl-[12px]" className="ml-[18px]" />
          <Fit className="ml-[14px] w-[163px] text-[#d03a3a]">量:11.02亿</Fit>
          <Fit className="ml-[19px] w-[158px]">M5:6.43亿</Fit>
          <Fit className="ml-[18px] w-[177px] text-[#e77f45]">M10:4.57亿</Fit>
          <Fit className="ml-[18px] w-[117px]">换手率:</Fit>
          <Fit className="w-[91px] text-[#48a8d0]">2.40%</Fit>
        </div>
      </section>

      <section className="mx-[12px] flex h-[206px] border-2 border-[#ebebeb]">
        <div className="relative w-[766px] shrink-0 overflow-hidden">
          <div className="flex h-[70px] items-start text-[35px] text-[#2c2c2c]">
            <Dropdown label="AI牛熊线" w="w-[143px]" box="w-[197px] pl-[11px]" className="ml-[11px] mt-[9px]" />
            <Help className="ml-[7px] mt-[15px] h-[36px] w-[36px] text-[26px]" />
            <span className="ml-[19px] mt-[18px] shrink-0"><LegendStars color="#d23a3a" /></span>
            <Fit className="ml-[8px] mt-[11px] w-[144px]">趋势上涨</Fit>
            <span className="ml-[18px] mt-[18px] shrink-0"><LegendStars color="#12951a" /></span>
            <Fit className="ml-[8px] mt-[11px] w-[144px]">趋势下跌</Fit>
          </div>
          <TrendChart />
        </div>
        <div className="flex flex-1 flex-col items-center bg-gradient-to-b from-[#f2f3f4] via-[#f3f5f6] to-[#f3f3f6]">
          <svg width="72" height="72" viewBox="0 0 72 72" className="mt-[5px] shrink-0">
            <defs>
              <linearGradient id="blue" x1="0" y1="0" x2="1" y2="1"><stop stopColor="#5ea2fb" /><stop offset="1" stopColor="#2f6ff4" /></linearGradient>
            </defs>
            <rect width="72" height="72" rx="14" fill="url(#blue)" />
            <circle cx="34" cy="34" r="20.500" fill="#9fcbff" stroke="#fff" strokeWidth="4" />
            <circle cx="34" cy="28" r="7" fill="#2f7cf6" />
            <path d="M21 46Q23 37 30 36L34 41L38 36Q45 37 47 46Q34 58 21 46Z" fill="#fff" />
            <path d="M32 39H36L37 50L34 53L31 50Z" fill="#2f7cf6" />
            <path d="M54 52L59 58" stroke="#fff" strokeWidth="8" strokeLinecap="round" />
          </svg>
          <Fit className="mt-[18px] w-[143px] text-[36px] text-[#222]">决策助手</Fit>
          <div className="mt-[18px] flex items-center">
            <Fit className="w-[178px] text-[29px] text-[#666]">挖潜力上涨股</Fit>
            <svg width="11" height="18" viewBox="0 0 11 18" className="ml-[14px]"><path d="M1 0L11 9L1 18Z" fill="#555" /></svg>
          </div>
        </div>
      </section>

      <section className="relative mt-[12px] h-[209px]">
        <Bars data={amount} x0={18} base={207} gridY={103} m5={amtM5} m10={amtM10} origin={8} m10Color="#d0a43a" left={13} />
        <div className="relative flex h-[61px] items-center text-[35px] text-[#2c2c2c]">
          <Dropdown label="成交额" w="w-[106px]" box="w-[161px] pl-[12px]" className="ml-[25px] mt-[11px]" />
          <Fit className="ml-[13px] mt-[2px] w-[162px] text-[#d03a3a]">额:1.2万亿</Fit>
          <Fit className="ml-[19px] mt-[2px] w-[195px] text-black">M5:6265.1亿</Fit>
          <Fit className="ml-[18px] mt-[2px] w-[214px] text-[#d9a325]">M10:4344.6亿</Fit>
          <Fit className="ml-[19px] mt-[2px] w-[117px]">换手率:</Fit>
          <Fit className="mt-[2px] w-[92px] text-[#48a8d0]">2.40%</Fit>
        </div>
      </section>
    </>
  );
}

function BottomBar() {
  return (
    <footer className="grid h-[153px] shrink-0 grid-cols-[360px_358px_362px] bg-[#252525] pt-[25px] text-[35px] text-[#d6d6d6]">
      <div className="flex flex-col items-center">
        <span className="flex h-[51px] w-[49px] items-center justify-center rounded-[6px] border-[3px] border-[#c8393c] bg-[#3a1c1e] text-[28px] font-bold leading-none text-[#e8343c]">买</span>
        <Fit className="mt-[14px] w-[106px]">买指数</Fit>
      </div>
      <div className="flex flex-col items-center">
        <svg width="49" height="49" viewBox="0 0 49 49" fill="none" stroke="#e0e0e0" strokeWidth="3"><path d="M1.500 1.500H47.500V47.500H1.500ZM24.500 12V37M12 24.500H37" /></svg>
        <Fit className="mt-[17px] w-[106px]">加自选</Fit>
      </div>
      <div className="flex flex-col items-center">
        <svg width="52" height="52" viewBox="0 0 52 52" fill="none" stroke="#a3a3a3"><circle cx="26" cy="26" r="23.500" strokeWidth="4" /><path d="M17.500 17.500H34.500M17.500 26H34.500M17.500 34.500H34.500" strokeWidth="4.500" strokeLinecap="round" /></svg>
        <svg width="200" height="46" viewBox="0 0 200 46" className="ml-[128px] mt-[9px] shrink-0">
          <defs>
            <linearGradient id="smear" x1="0" y1="0" x2="0" y2="1"><stop stopColor="#777" /><stop offset="1" stopColor="#777" stopOpacity="0" /></linearGradient>
          </defs>
          <rect x="4" y="8" width="186" height="36" fill="#232323" />
          <path d="M46 8L65 8L58 26H46Z" fill="url(#smear)" opacity="0.7" />
          <g fill="#ccc">
            <rect x="25" y="5" width="3" height="5" rx="1" />
            <rect x="48" y="5" width="3" height="5" rx="1" />
            <rect x="61" y="5" width="3" height="4" rx="1" />
            <rect x="71" y="6" width="2" height="3" rx="1" />
            <rect x="187" y="23" width="6" height="3" rx="1" />
            <rect x="187" y="38" width="6" height="3" rx="1" />
          </g>
          <path d="M91 37Q99 45 107 37" fill="none" stroke="#ddd" strokeWidth="4" />
        </svg>
      </div>
    </footer>
  );
}

export default function App() {
  return (
    <div className="flex h-[2400px] w-[1080px] flex-col overflow-hidden bg-white font-[Roboto,'Noto_Sans_CJK_SC',sans-serif]">
      <header className="h-[256px] shrink-0 bg-[#f23037]">
        <StatusBar />
        <NavBar />
      </header>
      <div className="h-[1991px] shrink-0 overflow-hidden">
        <Quote />
        <News />
        <PeriodTabs />
        <MaLegend />
        <section className="relative h-[641px]">
          <PriceChart />
          <div className="absolute left-[21px] top-[481px] flex gap-[104px]">
            <RoundButton d="M19 3L3 20L19 37M34 3L18 20L34 37" />
            <RoundButton d="M20 4V36M4 20H36" />
            <RoundButton d="M4 20H36" />
            <RoundButton d="M26 3L9 20L26 37" />
            <RoundButton d="M14 3L31 20L14 37" />
            <RoundButton d="M3 17V4H16M37 22V36H23" />
          </div>
        </section>
        <Indicators />
        <div className="mt-[5px] h-[12px] bg-[#f4f4f4]" />
        <div className="flex pl-[40px] pt-[36px] text-[43px] text-[#6b6b6b]">
          <Fit className="w-[97px] text-[48px] font-bold text-[#2a2a2a]">新闻</Fit>
          <Fit className="ml-[89px] mt-[4px] w-[130px]">成分股</Fit>
          <Fit className="ml-[87px] mt-[4px] w-[196px]">简况(F10)</Fit>
          <Fit className="ml-[90px] mt-[4px] w-[86px]">资金</Fit>
          <Fit className="ml-[93px] mt-[4px] w-[86px]">基金</Fit>
        </div>
      </div>
      <BottomBar />
    </div>
  );
}
